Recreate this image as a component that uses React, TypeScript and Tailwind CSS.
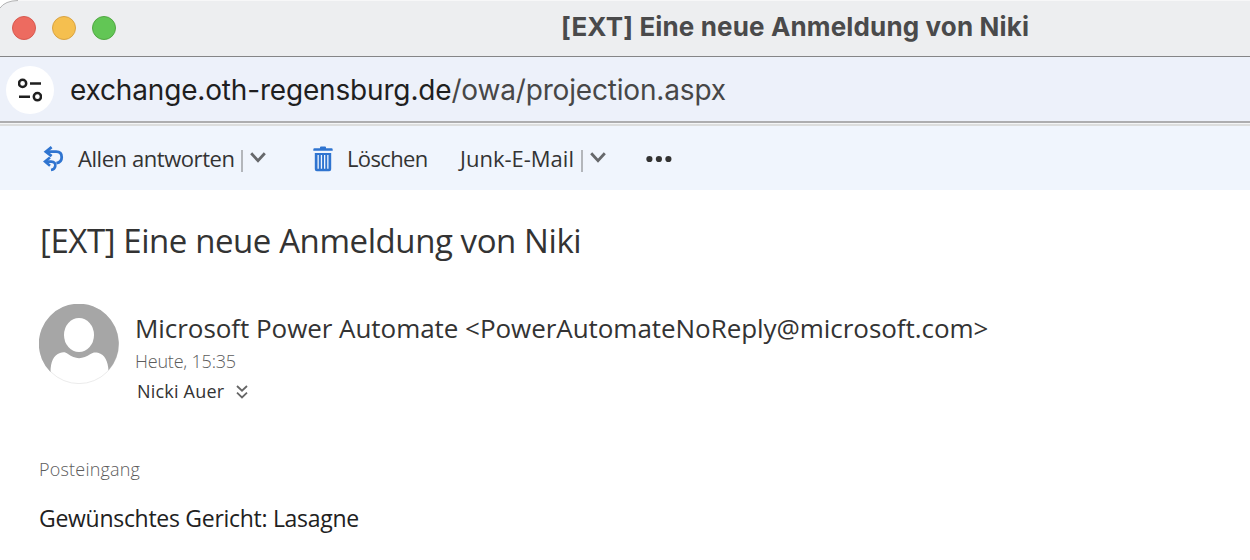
import React from 'react';

const uiFont = "font-['Open_Sans','Noto_Sans',sans-serif]";

function ReplyAllIcon() {
  return (
    <svg className="h-[26px] w-[22px] shrink-0" viewBox="0 0 22 26" fill="none" stroke="#2f74d0">
      <path d="M3 5.7H13.2C17 5.7 18.7 8.2 18.7 11.2C18.7 14.5 16.8 16.6 13.4 17.2" strokeWidth="2.8" />
      <path d="M8.6 1.2L2.9 5.7L8.6 10.2" strokeWidth="2.8" />
      <path d="M2 15.6H8.2C11.4 15.6 12.6 17.6 12.3 20C12 22.2 10.6 23.7 8 24" strokeWidth="2.6" />
      <path d="M7 11.6L2 15.6L7 19.8" strokeWidth="2.6" />
    </svg>
  );
}

function TrashIcon() {
  return (
    <svg className="h-[26px] w-5 shrink-0" viewBox="0 0 20 26" fill="#2f74d0">
      <path d="M7 1.5Q7 .5 8 .5H12Q13 .5 13 1.5V2.3H18.5Q19.7 2.3 19.7 3.6V4.8H.3V3.6Q.3 2.3 1.5 2.3H7Z" />
      <path fillRule="evenodd" d="M1.8 7H18.2V23.3Q18.2 25.3 16.2 25.3H3.8Q1.8 25.3 1.8 23.3ZM4.5 9V22.8H5.8V9ZM7.8 9V22.8H9.1V9ZM11 9V22.8H12.3V9ZM14.2 9V22.8H15.5V9Z" />
    </svg>
  );
}

function Chevron() {
  return (
    <svg className="h-3 w-4 shrink-0" viewBox="0 0 16 12" fill="none" stroke="#66686b" strokeWidth="2.8">
      <path d="M1.2 1.3L8 8.7L14.8 1.3" />
    </svg>
  );
}

function TitleBar() {
  return (
    <header className="relative flex h-[57px] items-start border-b border-[#858587] bg-[#edeef0] pl-3 shadow-[inset_0_1px_0_#f7f7f8]">
      <svg className="absolute top-0 left-0 h-3 w-5" viewBox="0 0 20 12" fill="none">
        <path d="M0 0H18Q5 .5 0 8Z" fill="#fff" />
        <path d="M0 8Q5 .8 18 .5" stroke="#b4b4b5" />
      </svg>
      <div className="flex gap-4 pt-4">
        <span className="size-6 rounded-full border border-[#d75a50] bg-[#ed6b60]" />
        <span className="size-6 rounded-full border border-[#d9a343] bg-[#f5bf4f]" />
        <span className="size-6 rounded-full border border-[#52a843] bg-[#62c655]" />
      </div>
      <h1 className="ml-[445px] pt-[11px] font-['Inter',sans-serif] text-[26px] leading-8 font-bold tracking-[0.14px] whitespace-nowrap text-[#4a4a4b]">
        [EXT] Eine neue Anmeldung von Niki
      </h1>
    </header>
  );
}

function AddressBar() {
  return (
    <div className="flex h-16 items-center bg-[#edf1fa] pl-1.5">
      <span className="mt-0.5 flex size-12 items-center justify-center rounded-full bg-white">
        <svg className="size-6" viewBox="0 0 24 24" fill="none" stroke="#1f1f1f" strokeWidth="2.5">
          <circle cx="4.6" cy="5.4" r="3.6" />
          <path d="M12 5.4H23M1 18.7H12" />
          <circle cx="19.4" cy="18.7" r="3.6" />
        </svg>
      </span>
      <span className="ml-4 pt-0.5 font-['Inter',sans-serif] text-[28px] tracking-[-0.17px] whitespace-nowrap text-[#474747]">
        <span className="text-[#1f1f1f]">exchange.oth-regensburg.de</span>/owa/projection.aspx
      </span>
    </div>
  );
}

function Toolbar() {
  return (
    <nav className="flex h-16 items-center bg-[#f0f5fd] pt-0.5 pl-[43px] text-[22px] whitespace-nowrap text-[#333]">
      <ReplyAllIcon />
      <span className="ml-[13px] w-[163px] pb-px tracking-[-0.44px]">Allen antworten</span>
      <span className="mt-1 mr-[7px] h-[22px] w-0.5 bg-[#b3b6bb]" />
      <span className="flex pb-0.5"><Chevron /></span>
      <span className="ml-[47px] flex"><TrashIcon /></span>
      <span className="ml-[14px] w-[113px] pb-px tracking-[-0.65px]">Löschen</span>
      <span className="w-[121px] pb-px">Junk-E-Mail</span>
      <span className="mt-1 mr-[7px] h-[22px] w-0.5 bg-[#b3b6bb]" />
      <span className="flex pb-0.5"><Chevron /></span>
      <svg className="ml-10 h-2 w-[26px]" viewBox="0 0 26 8" fill="#333">
        <circle cx="3.4" cy="4" r="3.1" />
        <circle cx="12.9" cy="4" r="3.1" />
        <circle cx="22.4" cy="4" r="3.1" />
      </svg>
    </nav>
  );
}

function Avatar() {
  return (
    <svg className="size-20 shrink-0" viewBox="0 0 80 80">
      <circle cx="40" cy="40" r="39.6" fill="#fff" stroke="#dedede" strokeWidth=".6" />
      <path fill="#a6a6a6" d="M11.5 68A40 40 0 1 1 69.5 66.5C69 58 66 50.5 59 48.8C56 48 53.5 48.5 51.5 50C44 55.5 36 55.5 29 50C26.5 48 24 48 21 49C14.5 51 11.7 58 11.5 68Z" />
      <ellipse cx="40" cy="31" rx="15" ry="17" fill="#fff" />
    </svg>
  );
}

function Message() {
  return (
    <main className="flex flex-col pt-7 pl-[39px] whitespace-nowrap">
      <h2 className="h-12 pl-px text-[33px] leading-[45px] tracking-[-0.42px] text-[#333]">[EXT] Eine neue Anmeldung von Niki</h2>
      <section className="mt-[38px] flex">
        <Avatar />
        <div className="ml-4 flex flex-col text-[#333]">
          <p className="mt-1.5 h-9 text-[26px] leading-9 tracking-[-0.05px]">Microsoft Power Automate &lt;PowerAutomateNoReply@microsoft.com&gt;</p>
          <p className="mt-[3px] h-6 text-[18px] leading-6 font-light tracking-[-0.2px] text-[#5c5c5c]">Heute, 15:35</p>
          <p className="mt-1.5 flex h-6 items-center pl-0.5 text-[18px] leading-6">
            <span className="w-[99px] tracking-[0.2px]">Nicki Auer</span>
            <svg className="mt-0.5 h-[14px] w-3" viewBox="0 0 12 14" fill="none" stroke="#666" strokeWidth="1.8">
              <path d="M1 1L6 5.7L11 1M1 7.7L6 12.4L11 7.7" />
            </svg>
          </p>
        </div>
      </section>
      <p className="mt-[54px] h-6 text-[18px] leading-6 font-light tracking-[0.2px] text-[#5c5c5c]">Posteingang</p>
      <p className="mt-[21px] h-8 text-[23px] leading-8 tracking-[-0.29px] text-[#212121]">Gewünschtes Gericht: Lasagne</p>
    </main>
  );
}

export default function App() {
  return (
    <div className={`h-[560px] w-[1250px] overflow-hidden bg-white ${uiFont}`}>
      <TitleBar />
      <AddressBar />
      <div className="h-[5px] border-t-2 border-b-2 border-t-[#adadaf] border-b-[#dcdddd] bg-[#f4f5f6]" />
      <Toolbar />
      <Message />
    </div>
  );
}
